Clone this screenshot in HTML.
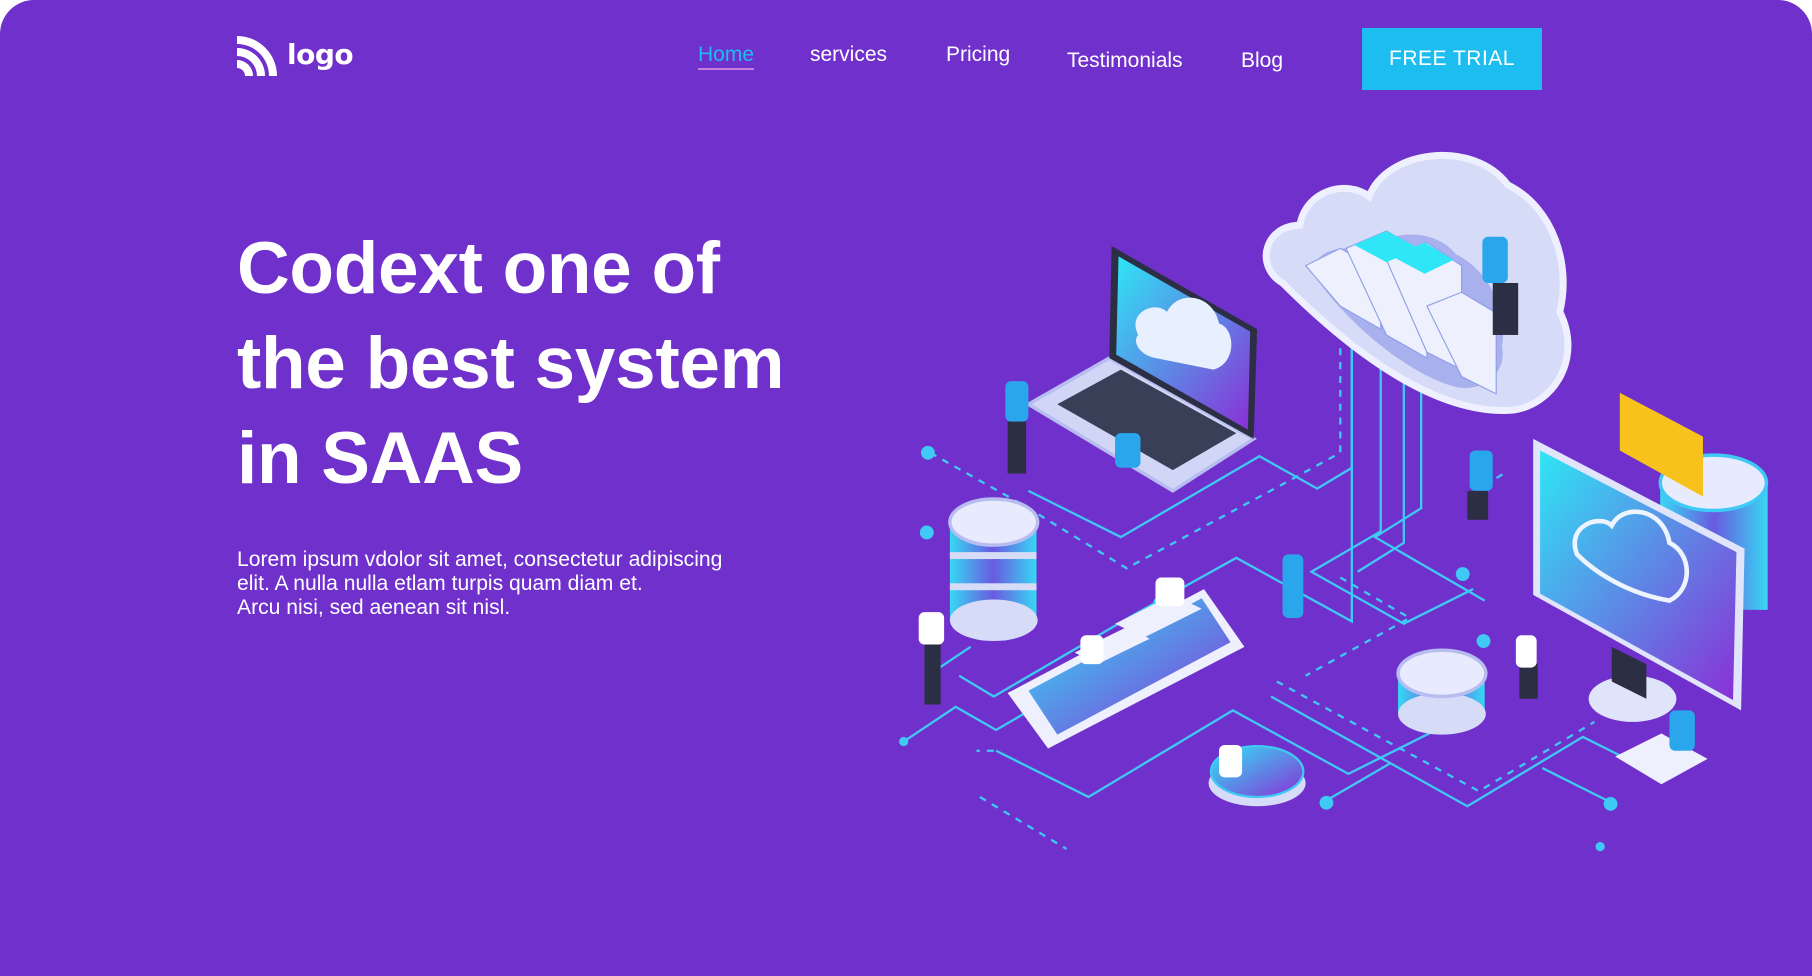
<!DOCTYPE html>
<html><head><meta charset="utf-8"><style>
*{margin:0;padding:0;box-sizing:border-box}
html,body{width:1812px;height:976px;overflow:hidden;background:#fff}
.page{position:absolute;left:0;top:0;width:1812px;height:976px;background:#7030CB;border-radius:34px 34px 0 0;font-family:"Liberation Sans",sans-serif;color:#fff}
.logo{position:absolute;left:237px;top:36px;display:flex;align-items:center}
.logo span{font-family:"DejaVu Sans","Liberation Sans",sans-serif;font-weight:bold;font-size:28px;margin-left:10px;letter-spacing:-0.5px;margin-top:-4px}
.nav a{position:absolute;font-size:21px;color:#fff;text-decoration:none;font-family:"Liberation Sans",sans-serif}
.btn{position:absolute;left:1362px;top:28px;width:180px;height:62px;background:#1DBDEF;color:#fff;font-size:21px;display:flex;align-items:center;justify-content:center;font-family:"Liberation Sans",sans-serif;letter-spacing:.5px}
h1{position:absolute;left:237px;top:221px;font-family:"Liberation Sans",sans-serif;font-weight:bold;font-size:73px;line-height:95px;letter-spacing:-0.3px}
p{position:absolute;left:237px;top:548px;font-size:21.1px;line-height:24px}
svg{position:absolute;left:0;top:0}
</style></head><body><div class="page">
<div class="logo"><svg style="position:static" width="40" height="40" viewBox="0 0 40 40"><path d="M0 0a40 40 0 0 1 40 40h-8A32 32 0 0 0 0 8z" fill="#fff"/><path d="M0 12a28 28 0 0 1 28 28h-8A20 20 0 0 0 0 20z" fill="#fff"/><path d="M0 24a16 16 0 0 1 16 16H8A8 8 0 0 0 0 32z" fill="#fff"/></svg><span>logo</span></div>
<div class="nav">
<a style="left:698px;top:43px;color:#1DBDEF;border-bottom:2px solid #c77ee0;padding-bottom:1px">Home</a>
<a style="left:810px;top:43px">services</a>
<a style="left:946px;top:43px">Pricing</a>
<a style="left:1067px;top:49px">Testimonials</a>
<a style="left:1241px;top:49px">Blog</a>
</div>
<div class="btn">FREE TRIAL</div>
<h1>Codext one of<br>the best system<br>in SAAS</h1>
<p>Lorem ipsum vdolor sit amet, consectetur adipiscing<br>elit. A nulla nulla etlam turpis quam diam et.<br>Arcu nisi, sed aenean sit nisl.</p>
<svg width="1812" height="976" viewBox="0 0 1568 845">
<defs>
<linearGradient id="g1" x1="0" y1="0" x2="1" y2="1"><stop offset="0" stop-color="#2ee6f5"/><stop offset="1" stop-color="#8a2fd6"/></linearGradient>
<linearGradient id="g2" x1="0" y1="0" x2="1" y2="0"><stop offset="0" stop-color="#37d8f3"/><stop offset=".5" stop-color="#6a5ae0"/><stop offset="1" stop-color="#37d8f3"/></linearGradient>
</defs>
<g fill="none" stroke="#3fc9f5" stroke-width="2">
<path d="M782 642l45-30 35 20 60-35"/><path d="M862 650l80 40 125-75 100 55 100-50"/><path d="M1100 603l170 95 100-60 40 20"/>
<path d="M890 425l80 40 120-70 50 28 30-18V290"/><path d="M830 585l30 18 120-70 90-50 100 55 V300"/>
<path d="M1195 300v160l-60 35 80 45 60-30"/><path d="M1215 300v170l-40 25"/><path d="M1230 300v140l-40 25 95 55"/>
<path d="M1335 665l60 30"/><path d="M1148 693l55-32"/><path d="M840 560l-30 20"/>
<g stroke-dasharray="6 6"><path d="M805 392l80 45 90 55 130-70 55-30V300"/><path d="M848 690l75 45"/><path d="M1105 590l175 95 100-60"/><path d="M1160 500l60 35-90 50"/><path d="M1285 420l20-12"/><path d="M860 650l-15 0"/></g>
</g>
<g fill="#3fc9f5"><circle cx="803" cy="392" r="6"/><circle cx="802" cy="461" r="6"/><circle cx="782" cy="642" r="4"/><circle cx="1148" cy="695" r="6"/><circle cx="1284" cy="555" r="6"/><circle cx="1266" cy="497" r="6"/><circle cx="1394" cy="696" r="6"/><circle cx="1385" cy="733" r="4"/><circle cx="1003" cy="522" r="5"/></g>
<path d="M1110 245c-25-15-15-50 15-50 5-30 40-40 60-25 15-40 90-50 120-10 40 20 55 70 45 110 20 40 -5 80-40 85-60 5-130-40-200-110z" fill="#d6dbf8" stroke="#eef0ff" stroke-width="6"/>
<path d="M1135 235c5-20 30-25 50-15 10-20 55-25 75 0 30 15 45 50 40 80 5 25-20 40-40 35-40-10-95-55-125-100z" fill="#a9b0ee"/>
<g fill="#eef1fd" stroke="#8fa0e8" stroke-width="1"><path d="M1130 230l30-15 35 20v50l-35 -20z"/><path d="M1165 215l35-15 35 20v90l-35-20z"/><path d="M1200 225l35-15 30 20v90l-30-15z"/><path d="M1235 265l30-12 30 18v70l-30 -15z"/></g>
<g fill="#2ee6f5"><path d="M1172 212l28-12 28 15-28 12z"/><path d="M1205 222l28-12 25 15-25 12z"/></g>
<path d="M890 350l70-40 125 70-70 45z" fill="#d2d6f6" stroke="#b7bdf0" stroke-width="3"/>
<path d="M915 350l55-30 100 55-55 32z" fill="#3a3f58"/>
<path d="M962 213l126 72-3 95-125-70z" fill="#2c2f44"/>
<path d="M968 222l114 65-2 85-114-65z" fill="url(#g1)"/>
<path d="M985 290c-10-20 15-30 25-20 10-20 40-15 45 10 15 5 15 35-5 40l-50-10c-15-3-20-15-15-20z" fill="#e8f0ff"/>
<g><rect x="822" y="452" width="75" height="85" fill="url(#g2)"/><ellipse cx="860" cy="537" rx="38" ry="18" fill="#d6dbf8"/><rect x="822" y="478" width="75" height="6" fill="#d6dbf8"/><rect x="822" y="505" width="75" height="6" fill="#d6dbf8"/><ellipse cx="860" cy="452" rx="38" ry="20" fill="#e8ebfd" stroke="#b7bdf0" stroke-width="3"/></g>
<rect x="1210" y="583" width="75" height="35" fill="url(#g2)"/><ellipse cx="1248" cy="618" rx="38" ry="18" fill="#d6dbf8"/><ellipse cx="1248" cy="583" rx="38" ry="20" fill="#e8ebfd" stroke="#b7bdf0" stroke-width="3"/>
<rect x="1437" y="418" width="93" height="110" fill="url(#g2)"/><ellipse cx="1483" cy="418" rx="46" ry="24" fill="#e8ebfd" stroke="#3fc9f5" stroke-width="3"/>
<path d="M1402 340l72 38v52l-72-40z" fill="#f6c21b"/>
<ellipse cx="1413" cy="605" rx="38" ry="20" fill="#e0e4fb"/><path d="M1395 560l30 15v30l-30-15z" fill="#2c2f44"/>
<path d="M1327 380l183 95-3 140-180-100z" fill="#e1e5fb"/>
<path d="M1333 390l170 88-3 128-167-92z" fill="url(#g1)"/>
<path d="M1365 480c-10-25 20-35 30-25 10-20 45-15 50 15 20 10 20 40 0 50-30-5-60-20-80-40z" fill="none" stroke="#eef4ff" stroke-width="4"/>
<path d="M872 600l170-90 35 50-170 88z" fill="#eef0fd"/>
<path d="M890 598l150-80 25 38-150 80z" fill="url(#g1)"/>
<path d="M965 540l50-25 25 12-50 25z" fill="#eef0fd"/><path d="M930 565l45-22 20 10-45 22z" fill="#eef0fd"/>
<ellipse cx="1088" cy="678" rx="42" ry="20" fill="#d6dbf8"/><ellipse cx="1088" cy="668" rx="40" ry="22" fill="url(#g1)" stroke="#3fc9f5" stroke-width="2"/>
<path d="M1398 655l40-20 40 22-40 22z" fill="#eef0fd"/>
<g fill="#2aa6ec"><rect x="870" y="330" width="20" height="35" rx="5"/><rect x="1283" y="205" width="22" height="40" rx="5"/><rect x="1272" y="390" width="20" height="35" rx="5"/><rect x="1110" y="480" width="18" height="55" rx="5"/><rect x="1445" y="615" width="22" height="35" rx="5"/><rect x="965" y="375" width="22" height="30" rx="5"/></g>
<g fill="#2c2f44"><rect x="872" y="365" width="16" height="45"/><rect x="1292" y="245" width="22" height="45"/><rect x="1270" y="425" width="18" height="25"/><rect x="800" y="555" width="14" height="55"/><rect x="1315" y="575" width="16" height="30"/></g>
<g fill="#fff"><rect x="795" y="530" width="22" height="28" rx="5"/><rect x="1312" y="550" width="18" height="28" rx="5"/><rect x="1000" y="500" width="25" height="25" rx="5"/><rect x="1055" y="645" width="20" height="28" rx="5"/><rect x="935" y="550" width="20" height="25" rx="5"/></g>
</svg>
</div></body></html>
